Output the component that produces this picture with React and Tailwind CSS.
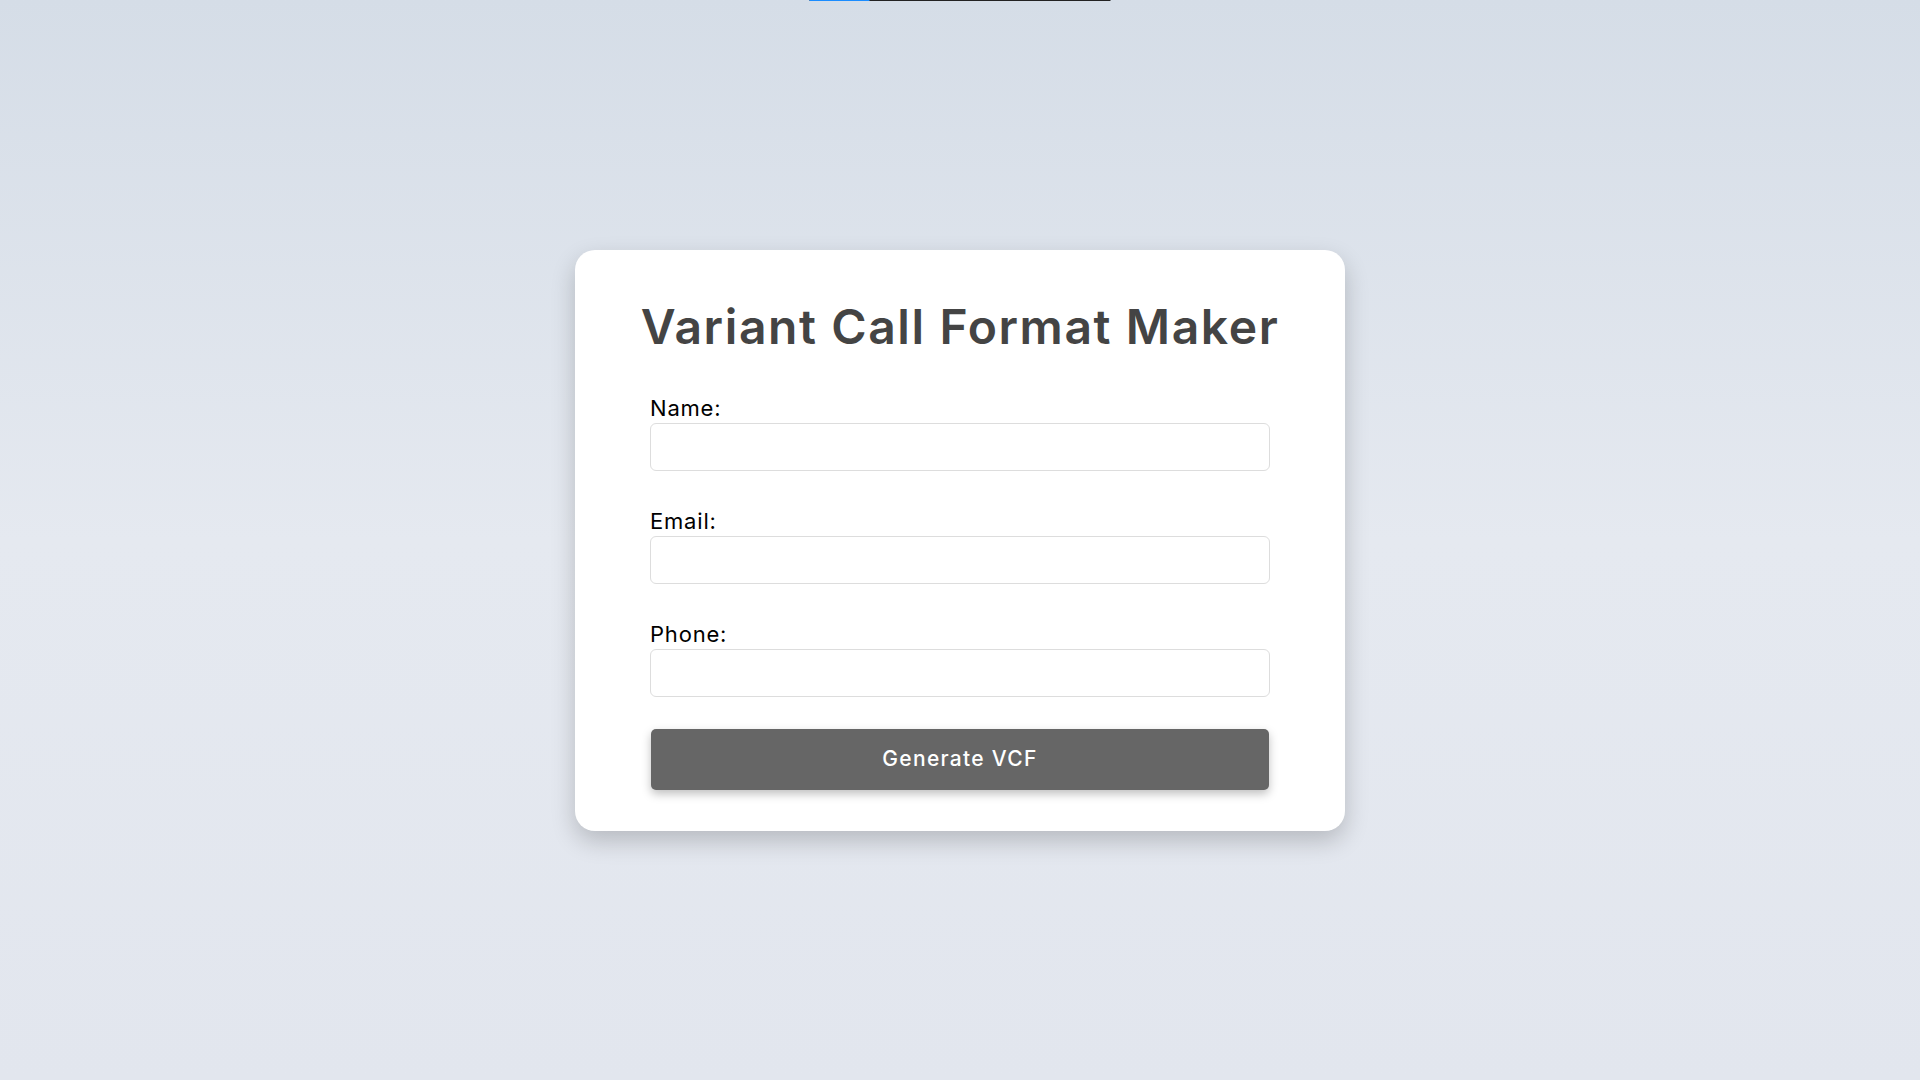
import React from "react";

export default function App() {
  return (
    <div
      className="relative min-h-screen w-full flex items-center justify-center bg-[linear-gradient(180deg,#d5dde7_0%,#e5e9f0_50%,#e2e6ee_100%)]"
      style={{ fontFamily: "Inter, 'Noto Sans', sans-serif" }}
    >
      <div className="absolute top-0 left-1/2 -translate-x-1/2 w-[301px] h-px flex bg-[#222222]">
        <div className="w-[60px] h-px bg-[#1a8cff]" />
      </div>
      <div className="w-[770px] bg-white rounded-[20px] pt-[49px] pb-[41px] px-[75px] shadow-[0_10px_25px_rgba(0,0,0,0.2)]">
        <h1 className="-mx-[40px] whitespace-nowrap text-center text-[48px] leading-[56px] font-semibold text-[#444444] tracking-[1.6px]">
          Variant Call Format Maker
        </h1>
        <form className="mt-[38px] flex flex-col">
          <label className="block text-[22px] leading-[30px] tracking-[0.8px] text-black">Name:</label>
          <input
            type="text"
            className="w-full h-[48px] border border-[#dddddd] rounded-[6px] bg-white"
          />
          <label className="block mt-[35px] text-[22px] leading-[30px] tracking-[0.8px] text-black">Email:</label>
          <input
            type="email"
            className="w-full h-[48px] border border-[#dddddd] rounded-[6px] bg-white"
          />
          <label className="block mt-[35px] text-[22px] leading-[30px] tracking-[0.8px] text-black">Phone:</label>
          <input
            type="tel"
            className="w-full h-[48px] border border-[#dddddd] rounded-[6px] bg-white"
          />
          <button
            type="button"
            className="mt-[32px] mx-px h-[61px] bg-[#666666] text-white text-[21px] font-medium tracking-[1.3px] rounded-[5px] shadow-[0_4px_10px_rgba(0,0,0,0.25)]"
          >
            Generate VCF
          </button>
        </form>
      </div>
    </div>
  );
}
